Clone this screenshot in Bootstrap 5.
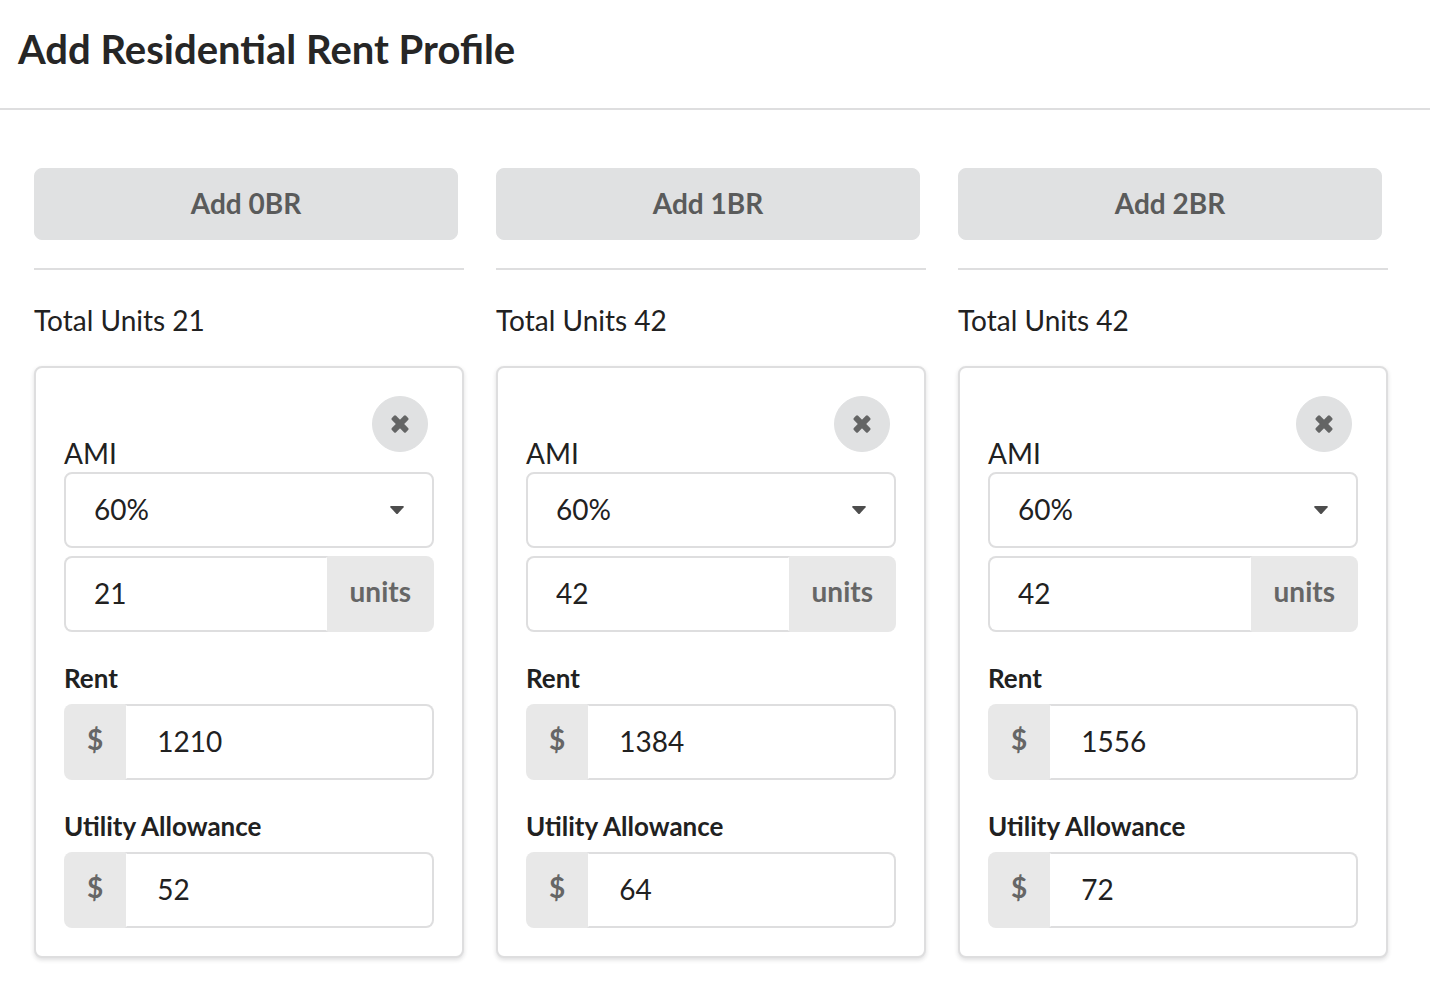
<!DOCTYPE html>
<html lang="en">
<head>
<meta charset="utf-8">
<meta name="viewport" content="width=device-width, initial-scale=1">
<title>Add Residential Rent Profile</title>
<link href="https://cdn.jsdelivr.net/npm/bootstrap@5.3.0/dist/css/bootstrap.min.css" rel="stylesheet">
<style>
  body { font-family: Lato, "Liberation Sans", sans-serif; font-size: 28px; line-height: 36px; color: #212121; background: #fff; }
  .page-head { padding: 24px 18px 34px; border-bottom: 2px solid #dededf; }
  .page-head h1 { font-size: 40px; line-height: 50px; font-weight: 700; color: #262626; }
  .profile-body { padding: 58px 42px 48px 34px; }
  .profile-row { --bs-gutter-x: 32px; --bs-gutter-y: 32px; }
  .add-wrap { padding-right: 6px; }
  .btn-soft { --bs-btn-bg: #e0e1e2; --bs-btn-color: #5a5b5b; --bs-btn-border-color: #e0e1e2; --bs-btn-hover-bg: #cacbcd; --bs-btn-hover-color: #4a4a4a; --bs-btn-active-bg: #babbbc; --bs-btn-hover-border-color: #cacbcd; --bs-btn-active-border-color: #babbbc; }
  .btn-add { height: 72px; border-radius: 8px; font-size: 28px; font-weight: 700; line-height: 36px; padding: 0 28px 2px; }
  .split { border: 0; border-top: 2px solid #dededf; opacity: 1; margin: 28px 0; }
  .total { margin: 0 0 24px; line-height: 44px; }
  .rent-card { padding: 28px; border: 2px solid #dededf; border-radius: 8px; box-shadow: 0 2px 4px rgba(34,36,38,.15); background: #fff; }
  .card-top { height: 76px; padding-right: 6px; line-height: 38px; }
  .btn-close-round { width: 56px; height: 56px; border-radius: 50%; padding: 0; }
  .field { height: 76px; font-size: 28px; line-height: 36px; color: #212121; border: 2px solid #dededf; border-radius: 8px; padding: 0 28px 2px; }
  select.field { padding-right: 56px; background: #fff url("data:image/svg+xml,%3Csvg xmlns='http://www.w3.org/2000/svg' viewBox='0 0 14 8'%3E%3Cpath fill='%234d4d4d' d='M1 0h12q1.300.4.5 1.400L8 7.500q-1 1-2 0L.5 1.400Q-.3.4 1 0z'/%3E%3C/svg%3E") no-repeat right 28px center / 14px 8px; }
  .addon { border: 0; border-radius: 8px; background: #e8e8e8; color: #666; font-size: 28px; line-height: 36px; font-weight: 700; padding: 0 23px 6px; }
  .input-group.has-left > .field { border-left-color: transparent; padding-left: 30px; margin-left: 0; }
  .has-right .field { border-right-color: transparent; }
  .field-name { display: block; font-size: 26px; line-height: 36px; font-weight: 700; margin: 28px 0 8px; }
</style>
<script src="https://cdn.jsdelivr.net/npm/bootstrap@5.3.0/dist/js/bootstrap.bundle.min.js"></script>
</head>
<body>
<header class="page-head"><h1 class="m-0">Add Residential Rent Profile</h1></header>
<main class="profile-body">
  <div class="row profile-row">
    <section class="col-12 col-md-4">
      <div class="add-wrap"><button type="button" class="btn btn-soft btn-add w-100">Add 0BR</button></div>
      <hr class="split">
      <p class="total">Total Units 21</p>
      <div class="rent-card">
        <div class="card-top d-flex justify-content-between">
          <label for="ami0" class="align-self-end">AMI</label>
          <button type="button" class="btn btn-soft btn-close-round d-flex align-items-center justify-content-center" aria-label="Remove">
            <svg width="20" height="20" viewBox="-10 -10 20 20" fill="#646565" aria-hidden="true"><rect x="-10" y="-3" width="20" height="6" rx="1.500" transform="rotate(45)"/><rect x="-10" y="-3" width="20" height="6" rx="1.500" transform="rotate(-45)"/></svg>
          </button>
        </div>
        <select id="ami0" class="form-select field mb-2"><option>50%</option><option selected>60%</option><option>80%</option></select>
        <div class="input-group flex-nowrap has-right">
          <input type="text" class="form-control field" value="21" id="units0" aria-label="Units"><label class="input-group-text addon" for="units0">units</label>
        </div>
        <label class="field-name" for="rent0">Rent</label>
        <div class="input-group flex-nowrap has-left">
          <span class="input-group-text addon">$</span><input type="text" class="form-control field" value="1210" id="rent0">
        </div>
        <label class="field-name" for="util0">Utility Allowance</label>
        <div class="input-group flex-nowrap has-left">
          <span class="input-group-text addon">$</span><input type="text" class="form-control field" value="52" id="util0">
        </div>
      </div>
    </section>
    <section class="col-12 col-md-4">
      <div class="add-wrap"><button type="button" class="btn btn-soft btn-add w-100">Add 1BR</button></div>
      <hr class="split">
      <p class="total">Total Units 42</p>
      <div class="rent-card">
        <div class="card-top d-flex justify-content-between">
          <label for="ami1" class="align-self-end">AMI</label>
          <button type="button" class="btn btn-soft btn-close-round d-flex align-items-center justify-content-center" aria-label="Remove">
            <svg width="20" height="20" viewBox="-10 -10 20 20" fill="#646565" aria-hidden="true"><rect x="-10" y="-3" width="20" height="6" rx="1.500" transform="rotate(45)"/><rect x="-10" y="-3" width="20" height="6" rx="1.500" transform="rotate(-45)"/></svg>
          </button>
        </div>
        <select id="ami1" class="form-select field mb-2"><option>50%</option><option selected>60%</option><option>80%</option></select>
        <div class="input-group flex-nowrap has-right">
          <input type="text" class="form-control field" value="42" id="units1" aria-label="Units"><label class="input-group-text addon" for="units1">units</label>
        </div>
        <label class="field-name" for="rent1">Rent</label>
        <div class="input-group flex-nowrap has-left">
          <span class="input-group-text addon">$</span><input type="text" class="form-control field" value="1384" id="rent1">
        </div>
        <label class="field-name" for="util1">Utility Allowance</label>
        <div class="input-group flex-nowrap has-left">
          <span class="input-group-text addon">$</span><input type="text" class="form-control field" value="64" id="util1">
        </div>
      </div>
    </section>
    <section class="col-12 col-md-4">
      <div class="add-wrap"><button type="button" class="btn btn-soft btn-add w-100">Add 2BR</button></div>
      <hr class="split">
      <p class="total">Total Units 42</p>
      <div class="rent-card">
        <div class="card-top d-flex justify-content-between">
          <label for="ami2" class="align-self-end">AMI</label>
          <button type="button" class="btn btn-soft btn-close-round d-flex align-items-center justify-content-center" aria-label="Remove">
            <svg width="20" height="20" viewBox="-10 -10 20 20" fill="#646565" aria-hidden="true"><rect x="-10" y="-3" width="20" height="6" rx="1.500" transform="rotate(45)"/><rect x="-10" y="-3" width="20" height="6" rx="1.500" transform="rotate(-45)"/></svg>
          </button>
        </div>
        <select id="ami2" class="form-select field mb-2"><option>50%</option><option selected>60%</option><option>80%</option></select>
        <div class="input-group flex-nowrap has-right">
          <input type="text" class="form-control field" value="42" id="units2" aria-label="Units"><label class="input-group-text addon" for="units2">units</label>
        </div>
        <label class="field-name" for="rent2">Rent</label>
        <div class="input-group flex-nowrap has-left">
          <span class="input-group-text addon">$</span><input type="text" class="form-control field" value="1556" id="rent2">
        </div>
        <label class="field-name" for="util2">Utility Allowance</label>
        <div class="input-group flex-nowrap has-left">
          <span class="input-group-text addon">$</span><input type="text" class="form-control field" value="72" id="util2">
        </div>
      </div>
    </section>
  </div>
</main>
</body>
</html>
